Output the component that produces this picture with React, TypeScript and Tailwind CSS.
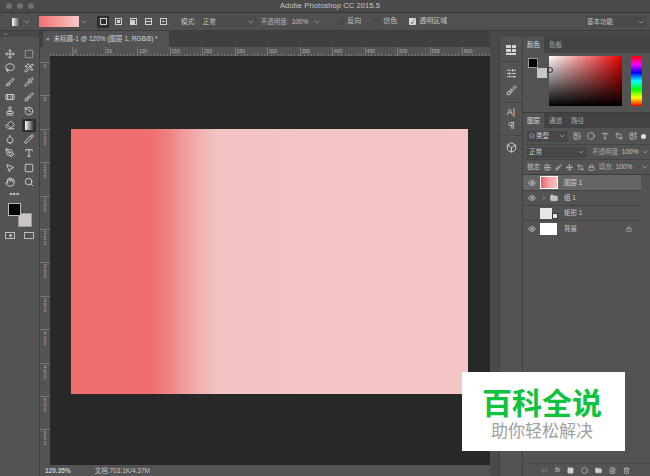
import {
  Move, Lasso, Wand2, Slice, Pipette, Bandage, Brush, Stamp, History, Eraser, Droplet, Pencil, PenTool, Type,
  MousePointer2, Square, SquareDashed, Hand, Search, Crop, Folder, Eye, Lock, ChevronDown, ChevronRight, Link2, Circle, FileText, Trash2,
  Box, SlidersHorizontal, Pilcrow, Image, Grid2x2, ImagePlus,
} from 'lucide-react';

const font = "font-['Liberation_Sans','Noto_Sans_CJK_SC',sans-serif]";

const hTicks = ['0', '50', '100', '150', '200', '250', '300', '350', '400', '450', '500', '550', '600'];
const vTicks = ['0', '5', '1 0 0', '1 5 0', '2 0 0', '2 5 0', '3 0 0', '3 5 0', '4 0 0', '4 5 0', '5 0 0', '5 5 0'];

const tools = [Move, SquareDashed, Lasso, Wand2, Slice, Pipette, Bandage, Brush, Stamp, History, Eraser, null, Droplet, Pencil, PenTool, Type, MousePointer2, Square, Hand, Search];

function Caret({ className = '' }: { className?: string }) {
  return <ChevronDown className={`w-2 h-2 text-[#b0b0b0] ${className}`} strokeWidth={2} />;
}

function Checkbox({ label, checked }: { label: string; checked?: boolean }) {
  return (
    <div className="flex items-center gap-[3px]">
      <div className={`w-[7px] h-[7px] rounded-[1px] flex items-center justify-center text-[6px] leading-none ${checked ? 'bg-[#d8d8d8] text-[#333]' : 'bg-[#4a4a4a]'}`}>
        {checked ? '✓' : ''}
      </div>
      <span className="text-[7px] text-[#c4c4c4]">{label}</span>
    </div>
  );
}

function ModeIcon({ active, children }: { active?: boolean; children?: React.ReactNode }) {
  return (
    <div className={`w-[12px] h-[12px] flex items-center justify-center ${active ? 'bg-[#2f2f2f]' : ''}`}>
      <div className="w-[7px] h-[7px] border border-[#d0d0d0] flex items-center justify-center">{children}</div>
    </div>
  );
}

function LayerRow({ name, selected, eye = true, thumb }: { name: string; selected?: boolean; eye?: boolean; thumb: React.ReactNode }) {
  return (
    <div className={`flex items-center h-[15px] mr-[9px] border-b border-[#454545] ${selected ? 'bg-[#666666] h-[16px]' : ''}`}>
      <div className="w-[17px] flex justify-center">
        {eye && <Eye className="w-2 h-2 text-[#dcdcdc]" />}
      </div>
      <div className="w-[22px] flex items-center">{thumb}</div>
      <span className="ml-[2px] text-[6.5px] text-[#d0d0d0]">{name}</span>
    </div>
  );
}

export default function App() {
  return (
    <div className={`${font} w-[650px] h-[476px] relative overflow-hidden flex flex-col bg-[#535353]`}>
      {/* Title bar */}
      <div className="h-[13px] shrink-0 bg-[#4a4a4a] border-b border-[#383838] flex items-center relative">
        <div className="flex gap-[5px] ml-[6px]">
          <div className="w-[6px] h-[6px] rounded-full bg-[#707070]" />
          <div className="w-[6px] h-[6px] rounded-full bg-[#707070]" />
          <div className="w-[6px] h-[6px] rounded-full bg-[#707070]" />
        </div>
        <span className="flex-1 text-center text-[7.5px] text-[#c8c8c8] tracking-[0.1px]">Adobe Photoshop CC 2015.5</span>
        <div className="w-[24px]" />
      </div>

      {/* Options bar */}
      <div className="h-[18px] shrink-0 bg-[#505050] border-b border-[#3c3c3c] flex items-center text-[6.5px] text-[#c4c4c4]">
        <div className="w-[9px] h-[8px] ml-[12px] shrink-0 bg-linear-to-r from-white to-[#333]" />
        <Caret className="ml-[2px]" />
        <div className="w-[40px] h-[11px] ml-[8px] bg-linear-to-r from-[#f06f70] to-[#f5c9c9]" />
        <Caret className="ml-[1px]" />
        <div className="flex gap-[3px] ml-[9px]">
          <ModeIcon active />
          <ModeIcon><div className="w-[3px] h-[3px] bg-[#d0d0d0]" /></ModeIcon>
          <ModeIcon><div className="w-[4px] h-[4px] bg-[#d0d0d0]" /></ModeIcon>
          <ModeIcon><div className="w-full h-px bg-[#d0d0d0]" /></ModeIcon>
          <ModeIcon><div className="w-[3px] h-px bg-[#d0d0d0]" /></ModeIcon>
        </div>
        <span className="ml-[12px]">模式:</span>
        <div className="ml-[5px] w-[56px] h-[11px] bg-[#4c4c4c] flex items-center justify-between px-[2px]">
          <span>正常</span>
          <Caret />
        </div>
        <span className="ml-[4px] text-[#b4b4b4]">不透明度:</span>
        <span className="ml-[3px]">100%</span>
        <Caret className="ml-[5px]" />
        <div className="ml-[16px] flex gap-[12px]">
          <Checkbox label="反向" />
          <Checkbox label="仿色" />
          <Checkbox label="透明区域" checked />
        </div>
        <div className="ml-auto mr-[3px] w-[62px] h-[11px] bg-[#4a4a4a] flex items-center justify-between px-[2px]">
          <span>基本功能</span>
          <Caret />
        </div>
      </div>

      {/* Body */}
      <div className="flex-1 flex min-h-0">
        {/* Tools */}
        <div className="w-[40px] shrink-0 border-r border-[#404040] flex flex-col items-center">
          <div className="h-[6px] w-full bg-[#484848] flex items-center pl-[4px]">
            <div className="w-[3px] h-[2px] border-x border-[#777]" />
          </div>
          <div className="grid grid-cols-2 w-[38px] mt-[10px] auto-rows-[14.2px]">
            {tools.map((Icon, i) => (
              <div key={i} className="flex items-center justify-center">
                {Icon ? (
                  <Icon className="w-[10px] h-[10px] text-[#d2d2d2]" strokeWidth={2.2} />
                ) : (
                  <div className="w-[14px] h-[13px] bg-[#303030] flex items-center justify-center">
                    <div className="w-[9px] h-[9px] bg-linear-to-r from-white to-[#333]" />
                  </div>
                )}
              </div>
            ))}
          </div>
          <div className="text-[8px] leading-none text-[#d2d2d2] mt-[1px] mr-[10px] font-bold tracking-[0.5px]">•••</div>
          <div className="relative w-[24px] h-[24px] mt-[5px]">
            <div className="absolute right-0 bottom-0 w-[14px] h-[14px] bg-[#cdc5c5] border border-[#999]" />
            <div className="absolute left-0 top-0 w-[13px] h-[13px] bg-black border border-[#bbb]" />
          </div>
          <div className="flex gap-[9px] mt-[5px]">
            <div className="w-[10px] h-[7px] border border-[#bcbcbc] flex items-center justify-center">
              <div className="w-[3px] h-[3px] rounded-full bg-[#bcbcbc]" />
            </div>
            <div className="w-[10px] h-[7px] border border-[#bcbcbc]" />
          </div>
        </div>

        {/* Document */}
        <div className="w-[450px] shrink-0 flex flex-col bg-[#404040]">
          <div className="h-[16px] shrink-0 flex bg-[#404040] pl-[3px]">
            <div className="w-[126px] h-full bg-[#535353] flex items-center pl-[3px] text-[6.5px] text-[#d4d4d4] whitespace-nowrap">
              <span className="text-[6px] mr-[4px]">×</span>未标题-1 @ 120% (图层 1, RGB/8) *
            </div>
          </div>
          {/* Horizontal ruler */}
          <div className="h-[9px] shrink-0 flex bg-[#535353]">
            <div className="w-[10px] shrink-0" />
            <div className="flex-1 flex pl-[23px] bg-[repeating-linear-gradient(90deg,#777_0,#777_1px,transparent_1px,transparent_3.35px)] bg-[length:100%_2px] bg-bottom bg-no-repeat">
              {hTicks.map(t => (
                <div key={t} className="w-[33.5px] shrink-0 text-[5px] leading-[8px] text-[#b4b4b4] border-l border-[#777] pl-[1px] -ml-px">{t}</div>
              ))}
            </div>
          </div>
          <div className="flex-1 flex min-h-0">
            {/* Vertical ruler */}
            <div className="w-[10px] shrink-0 bg-[#535353] flex flex-col pt-[6px] overflow-hidden">
              {vTicks.map(t => (
                <div key={t} className="h-[33.4px] shrink-0 flex flex-col items-center text-[4.5px] leading-[5px] text-[#b0b0b0] border-t border-[#777] pt-[1px]">
                  {t.split(' ').map((d, i) => <span key={i}>{d}</span>)}
                </div>
              ))}
            </div>
            {/* Canvas */}
            <div className="flex-1 bg-[#282828] pl-[21px] pt-[73px]">
              <div className="w-[397px] h-[265px] bg-[linear-gradient(90deg,#f06f6e_0%,#f06f6e_20%,#ee7f7f_24%,#ef9a9a_28%,#f2b4b4_33%,#f3c3c3_37%,#f3c5c5_100%)]" />
            </div>
          </div>
          {/* Status */}
          <div className="h-[11px] shrink-0 bg-[#535353] flex items-center text-[6.5px] text-[#c8c8c8]">
            <span className="ml-[5px] font-bold">120.35%</span>
            <span className="ml-[24px]">文档:703.1K/4.37M</span>
          </div>
        </div>

        {/* Dock */}
        <div className="w-[33px] shrink-0 flex flex-col">
          <div className="h-[6px] bg-[#484848] shrink-0" />
          <div className="flex-1 flex">
            <div className="w-[10px] bg-[#4a4a4a] border-r border-[#404040]" />
            <div className="flex-1 flex flex-col items-center border-r border-[#404040] text-[#d4d4d4]">
              <div className="w-full flex flex-col items-center gap-px pt-[8px] pb-[6px] border-b border-[#454545]">
                <div className="grid grid-cols-2 gap-px w-[10px]">
                  <div className="h-[3px] bg-[#d4d4d4]" />
                  <div className="h-[3px] bg-[#d4d4d4]" />
                  <div className="h-[3px] bg-[#d4d4d4]" />
                  <div className="h-[3px] bg-[#d4d4d4]" />
                </div>
                <div className="w-[10px] h-[2px] bg-[#d4d4d4]" />
              </div>
              <div className="w-full flex flex-col items-center gap-[6px] py-[6px] border-b border-[#454545]">
                <SlidersHorizontal className="w-[11px] h-[11px]" />
                <Brush className="w-[11px] h-[11px]" />
              </div>
              <div className="w-full flex flex-col items-center pt-[3px] pb-[5px] border-b border-[#454545]">
                <span className="text-[9px] leading-[13px]">A|</span>
                <Pilcrow className="w-[9px] h-[9px] mt-[2px]" />
              </div>
              <div className="py-[6px]"><Box className="w-[11px] h-[11px]" /></div>
            </div>
          </div>
        </div>

        {/* Panels */}
        <div className="flex-1 flex flex-col min-w-0">
          <div className="h-[6px] bg-[#484848] shrink-0" />
          {/* Colour panel */}
          <div className="h-[76px] shrink-0 flex flex-col border-b border-[#3c3c3c]">
            <div className="h-[16px] shrink-0 flex items-center bg-[#434343] text-[6.5px]">
              <div className="h-full w-[21px] bg-[#535353] flex items-center justify-center text-[#dcdcdc]">颜色</div>
              <span className="ml-[5px] text-[#a8a8a8]">色板</span>
            </div>
            <div className="flex mt-[3px] relative">
              <div className="relative w-[20px] h-[20px] ml-[5px] mt-[2px]">
                <div className="absolute right-[1px] bottom-0 w-[10px] h-[10px] bg-[#cdc5c5]" />
                <div className="absolute left-0 top-0 w-[10px] h-[10px] bg-black border border-[#999]" />
              </div>
              <div className="w-[73px] h-[50px] ml-[1px] relative bg-[linear-gradient(to_bottom,transparent,#000),linear-gradient(to_right,#fff,#e80000)]">
                <div className="absolute -left-[2px] top-[11px] w-[6px] h-[6px] rounded-full border border-[#333]" />
              </div>
              <div className="w-[11px] h-[50px] ml-[9px] bg-[linear-gradient(to_bottom,#f00,#f0f,#00f,#0ff,#0f0,#ff0,#f00)]" />
            </div>
          </div>
          {/* Layers panel */}
          <div className="flex-1 flex flex-col min-h-0">
            <div className="h-[15px] shrink-0 flex items-center bg-[#434343] text-[6.5px]">
              <div className="h-full w-[21px] bg-[#535353] flex items-center justify-center text-[#dcdcdc]">图层</div>
              <span className="ml-[5px] text-[#a8a8a8]">通道</span>
              <span className="ml-[9px] text-[#a8a8a8]">路径</span>
            </div>
            <div className="h-[17px] shrink-0 flex items-center text-[#d0d0d0] text-[6.5px] border-b border-[#454545] pl-[4px]">
              <div className="w-[41px] h-[11px] bg-[#474747] flex items-center justify-between px-[2px]">
                <span className="flex items-center gap-[1px]"><Search className="w-[6px] h-[6px]" />类型</span>
                <Caret />
              </div>
              <div className="flex gap-[6px] ml-[5px]">
                <Image className="w-[8px] h-[8px]" />
                <Circle className="w-[8px] h-[8px]" />
                <Type className="w-[8px] h-[8px]" />
                <Crop className="w-[8px] h-[8px]" />
                <ImagePlus className="w-[8px] h-[8px]" />
              </div>
              <div className="w-[5px] h-[5px] rounded-full bg-[#e0e0e0] ml-[4px]" />
            </div>
            <div className="h-[15px] shrink-0 flex items-center text-[#c8c8c8] text-[6.5px] border-b border-[#454545] pl-[4px]">
              <div className="w-[60px] h-[11px] bg-[#474747] flex items-center justify-between px-[2px]">
                <span>正常</span>
                <Caret />
              </div>
              <span className="ml-[5px] text-[#a8a8a8]">不透明度:</span>
              <span className="ml-[2px]">100%</span>
              <Caret className="ml-auto mr-[1px]" />
            </div>
            <div className="h-[15px] shrink-0 flex items-center text-[#c0c0c0] text-[6.5px] border-b border-[#3c3c3c] pl-[4px]">
              <span>锁定:</span>
              <div className="flex gap-[4px] ml-[2px] text-[#d4d4d4]">
                <Grid2x2 className="w-[7px] h-[7px]" />
                <Brush className="w-[7px] h-[7px]" />
                <Move className="w-[7px] h-[7px]" />
                <Crop className="w-[7px] h-[7px]" />
                <Lock className="w-[7px] h-[7px]" />
              </div>
              <span className="ml-[4px] text-[#a8a8a8]">填充:</span>
              <span className="ml-[2px]">100%</span>
              <Caret className="ml-auto mr-[1px]" />
            </div>
            <div className="flex flex-col">
              <LayerRow
                name="图层 1"
                selected
                thumb={<div className="w-[18px] h-[13px] border border-white bg-linear-to-r from-[#ea5e62] via-[#f5a5a8] to-[#f6c0c0]" />}
              />
              <LayerRow
                name="组 1"
                thumb={
                  <div className="flex items-center gap-[3px] pl-[1px]">
                    <ChevronRight className="w-[6px] h-[6px] text-[#c8c8c8]" />
                    <Folder className="w-[8px] h-[8px] text-[#d0d0d0] fill-[#c0c0c0]" />
                  </div>
                }
              />
              <LayerRow
                name="矩形 1"
                eye={false}
                thumb={
                  <div className="flex items-end">
                    <div className="w-[12px] h-[11px] bg-[#e8e8e8]" />
                    <div className="w-[6px] h-[6px] border border-[#333] bg-[#e8e8e8]" />
                  </div>
                }
              />
              <div className="flex items-center h-[16px] mr-[9px]">
                <div className="w-[17px] flex justify-center">
                  <Eye className="w-2 h-2 text-[#dcdcdc]" />
                </div>
                <div className="w-[22px]">
                  <div className="w-[17px] h-[12px] bg-white" />
                </div>
                <span className="ml-[2px] text-[6.5px] text-[#d0d0d0]">背景</span>
                <Lock className="w-[6px] h-[6px] text-[#c8c8c8] ml-auto mr-[9px]" />
              </div>
            </div>
            <div className="mt-auto h-[13px] shrink-0 flex items-center justify-end gap-[7px] pr-[20px] text-[#d0d0d0] border-t border-[#4a4a4a]">
              <Link2 className="w-[7px] h-[7px] text-[#8a8a8a]" />
              <span className="text-[6.5px] italic leading-none">fx</span>
              <Square className="w-[7px] h-[7px] fill-[#d0d0d0] text-[#d0d0d0]" />
              <Circle className="w-[7px] h-[7px]" />
              <Folder className="w-[7px] h-[7px] fill-[#d0d0d0]" />
              <FileText className="w-[7px] h-[7px]" />
              <Trash2 className="w-[7px] h-[7px]" />
            </div>
          </div>
        </div>
      </div>

      {/* Watermark */}
      <div className="absolute left-[462px] top-[372px] w-[163px] h-[79px] bg-white flex flex-col items-center justify-center pr-[3px]">
        <span className="text-[30px] leading-[36px] font-bold text-[#10c23e] font-['Noto_Sans_CJK_SC',sans-serif]">百科全说</span>
        <span className="text-[17px] leading-[22px] text-[#a0a0a0] font-['Noto_Sans_CJK_SC',sans-serif]">助你轻松解决</span>
      </div>
    </div>
  );
}
